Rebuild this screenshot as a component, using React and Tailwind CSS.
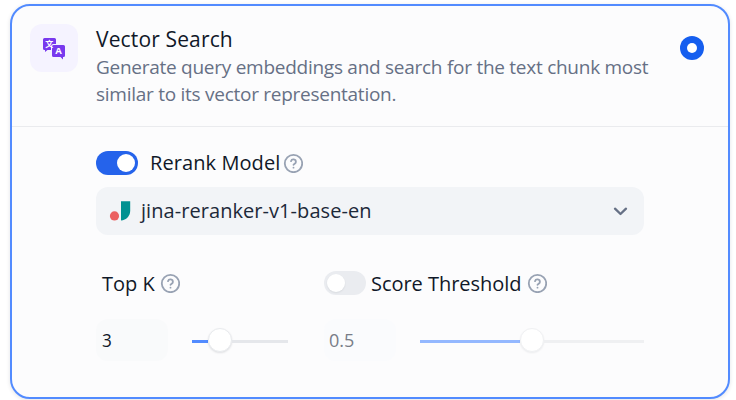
function HelpIcon() {
  return (
    <svg className="block size-5 shrink-0" viewBox="0 0 20 20" fill="none" stroke="#98a2b3" strokeWidth="1.8" strokeLinecap="round" strokeLinejoin="round">
      <circle cx="10.500" cy="10.500" r="8.700" />
      <path d="M8 8.200a2.500 2.500 0 0 1 4.900.8c0 1.600-2.400 2-2.400 2.800" />
      <path d="M10.500 14.600v.1" />
    </svg>
  );
}

function TranslateIcon() {
  return (
    <svg className="block size-6" viewBox="0 0 24 24">
      <path fill="#7839ee" d="M2.500 2h10A1.500 1.500 0 0 1 14 3.500V8h-2.500A2.500 2.500 0 0 0 9 10.500V14H5.500L3 16v-2h-.5A1.500 1.500 0 0 1 1 12.500v-9A1.500 1.500 0 0 1 2.500 2z" />
      <path fill="#7839ee" d="M11.500 9h10A1.500 1.500 0 0 1 23 10.500v9a1.500 1.500 0 0 1-1.500 1.500H21v2.500L18.500 21h-7a1.500 1.500 0 0 1-1.500-1.500v-9A1.500 1.500 0 0 1 11.500 9z" />
      <text x="7.300" y="10.800" textAnchor="middle" fontSize="8" className="fill-white font-['Noto_Sans_CJK_SC',sans-serif] font-bold">文</text>
      <text x="16.500" y="18.300" textAnchor="middle" fontSize="9.500" className="fill-white font-['Open_Sans',sans-serif] font-bold">A</text>
    </svg>
  );
}

export default function App() {
  return (
    <div className="h-[400px] w-[736px] overflow-hidden bg-white pt-1 pl-2.5 font-['Open_Sans','Noto_Sans',sans-serif] text-[#101828]">
      <div className="h-[395px] w-[720px] rounded-[20px] border-2 border-[#528bff] bg-[#fcfcfd] shadow-[0_1px_4px_rgba(16,24,40,0.12)]">
        <div className="flex h-[121px] border-b border-[#eaebee] pt-[18px] pl-[18px]">
          <div className="flex size-12 shrink-0 items-center justify-center rounded-xl bg-[#f5f3ff]">
            <TranslateIcon />
          </div>
          <div className="ml-[18px] w-[584px] shrink-0 whitespace-nowrap">
            <div className="h-[30px] text-[21px] leading-[30px] tracking-[0.14px]">Vector Search</div>
            <div className="text-[19px] leading-[27px] tracking-[-0.265px] text-[#667085]">
              <div>Generate query embeddings and search for the text chunk most</div>
              <div>similar to its vector representation.</div>
            </div>
          </div>
          <div className="mt-3 flex size-6 items-center justify-center rounded-full bg-[#155eef]">
            <div className="size-2.5 rounded-full bg-white" />
          </div>
        </div>

        <div className="pt-6 pl-[84px]">
          <div className="flex h-6 items-center">
            <div className="flex h-6 w-[42px] items-center justify-end rounded-full bg-[#2563eb] pr-[3px]">
              <div className="size-[18px] rounded-full bg-white" />
            </div>
            <div className="ml-3 w-[133px] text-[20px] leading-6 tracking-[0.08px] whitespace-nowrap">Rerank Model</div>
            <HelpIcon />
          </div>

          <div className="mt-3 flex h-12 w-[548px] items-center rounded-xl bg-[#f2f4f7] pr-4 pl-[13px]">
            <svg className="block h-6 w-6" viewBox="0 0 24 24">
              <circle cx="5.500" cy="16.900" r="4.600" fill="#eb6161" />
              <path fill="#009191" d="M12 2.200h9.200v9.600c0 5.300-4 9.400-9.200 9.700z" />
            </svg>
            <div className="ml-2 flex-1 text-[20px] leading-7 tracking-[0.06px] whitespace-nowrap text-[#1d2939]">jina-reranker-v1-base-en</div>
            <svg className="block size-4" viewBox="0 0 16 16" fill="none" stroke="#667085" strokeWidth="2.300" strokeLinecap="round" strokeLinejoin="round">
              <path d="M3 5.700L8.500 11 14 5.700" />
            </svg>
          </div>

          <div className="mt-9 flex w-[548px]">
            <div className="w-[228px]">
              <div className="flex h-6 items-center pl-1.5">
                <div className="w-[58px] pt-0.5 text-[20px] leading-6 whitespace-nowrap">Top K</div>
                <HelpIcon />
              </div>
              <div className="mt-6 flex h-[42px] items-center">
                <div className="flex h-[42px] w-[72px] items-center rounded-xl bg-[#f9fafb] pl-1.5 text-[19px]"><span className="origin-left scale-x-90">3</span></div>
                <div className="ml-6 flex w-24 items-center">
                  <div className="mt-[3px] h-[3px] w-4 bg-[#528bff]" />
                  <div className="size-6 rounded-full border border-[#e9ebee] bg-white shadow-[0_1px_2px_rgba(16,24,40,0.12)]" />
                  <div className="mt-[3px] h-[3px] flex-1 bg-[#e5e7eb]" />
                </div>
              </div>
            </div>
            <div className="w-[320px]">
              <div className="flex h-6 items-center">
                <div className="flex h-6 w-[42px] items-center rounded-full bg-[#eaecf0] pl-[3px]">
                  <div className="size-[18px] rounded-full bg-white shadow-[0_1px_2px_rgba(16,24,40,0.08)]" />
                </div>
                <div className="ml-[5px] w-[156px] pt-0.5 text-[20px] leading-6 tracking-[-0.04px] whitespace-nowrap">Score Threshold</div>
                <HelpIcon />
              </div>
              <div className="mt-6 flex h-[42px] items-center">
                <div className="flex h-[42px] w-[72px] items-center rounded-xl bg-[#fafbfd] pl-[5px] text-[19px] text-[#787d88]"><span className="origin-left scale-x-95">0.5</span></div>
                <div className="ml-6 flex w-56 items-center">
                  <div className="mt-[3px] h-[3px] w-[100px] bg-[#94b8ff]" />
                  <div className="size-6 rounded-full border border-[#f0f1f3] bg-white shadow-[0_1px_2px_rgba(16,24,40,0.07)]" />
                  <div className="mt-[3px] h-[3px] flex-1 bg-[#eff0f2]" />
                </div>
              </div>
            </div>
          </div>
        </div>
      </div>
    </div>
  );
}
